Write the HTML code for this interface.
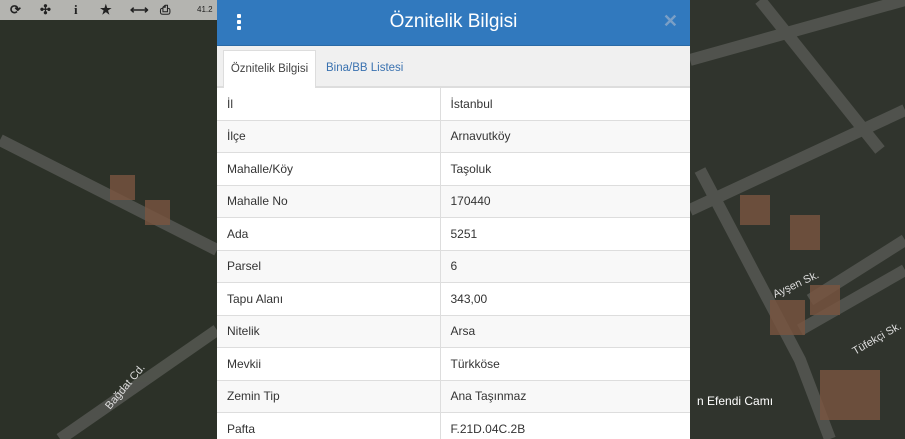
<!DOCTYPE html>
<html><head><meta charset="utf-8"><style>
*{margin:0;padding:0;box-sizing:border-box}
body{width:905px;height:439px;overflow:hidden;position:relative;background:#2f332c;font-family:"Liberation Sans",Arial,sans-serif}
#map{position:absolute;left:0;top:0}
.tb{position:absolute;left:0;top:0;width:217px;height:20px;background:#b4b4b0;color:#222;font-size:13px;font-weight:bold}
.tb span{position:absolute;top:2px}
.modal{position:absolute;left:217px;top:0;width:473px;height:439px;background:#fff;overflow:hidden}
.hd{height:46px;background:#3179be;border-bottom:1px solid #2a6aa6;color:#fff;position:relative}
.hd h1{font-size:19px;font-weight:normal;text-align:center;line-height:44px}
.dots{position:absolute;left:20px;top:14px;width:4px}
.dots i{display:block;width:4px;height:4px;background:#fff;border-radius:1px;margin-bottom:2px}
.x{position:absolute;right:12px;top:11px;color:#7a9fc6;font-size:18px;font-weight:bold}
.tabs{height:41px;background:#f0f0f0;position:relative;border-bottom:1px solid #ddd}
.t1{position:absolute;left:6px;top:4px;width:93px;height:38px;background:#fff;border:1px solid #ddd;border-bottom:none;font-size:11.5px;color:#444;text-align:center;line-height:37px}
.t2{position:absolute;left:109px;top:4px;font-size:11.5px;color:#3a72b0;line-height:37px}
table{width:473px;border-collapse:collapse;font-size:12px;color:#333}
td{height:32.5px;border-top:1px solid #ddd;padding-left:10px}
td:first-child{width:223px;border-right:1px solid #ddd}
tr:nth-child(even) td{background:#f8f8f8}
</style></head><body>
<svg id="map" width="905" height="439">
<rect width="905" height="439" fill="#30342d"/>
<rect x="0" y="0" width="217" height="439" fill="#2c3128"/>
<g stroke="#5e605b" stroke-width="12" fill="none" opacity=".7">
<path d="M690 210 L905 110"/><path d="M690 60 L905 0"/>
<path d="M700 170 L800 360 L830 439"/><path d="M760 0 L880 150"/>
<path d="M800 330 L905 270"/><path d="M810 300 L905 240"/>
<path d="M0 140 L217 250"/><path d="M60 439 L217 330"/>
</g>
<g fill="#7a5540" opacity=".8">
<rect x="740" y="195" width="30" height="30"/><rect x="790" y="215" width="30" height="35"/>
<rect x="770" y="300" width="35" height="35"/><rect x="810" y="285" width="30" height="30"/>
<rect x="820" y="370" width="60" height="50"/><rect x="110" y="175" width="25" height="25"/><rect x="145" y="200" width="25" height="25"/>
</g>
<text x="697" y="405" fill="#fff" font-size="12" font-family="Liberation Sans">n Efendi Camı</text>
<text x="110" y="410" fill="#ddd" font-size="11" transform="rotate(-50 110 410)" font-family="Liberation Sans">Bağdat Cd.</text>
<text x="775" y="298" fill="#ddd" font-size="11" transform="rotate(-25 775 298)" font-family="Liberation Sans">Ayşen Sk.</text>
<text x="855" y="355" fill="#ddd" font-size="11" transform="rotate(-30 855 355)" font-family="Liberation Sans">Tüfekçi Sk.</text>
</svg>
<div class="tb"><span style="left:10px">⟳</span><span style="left:40px">✣</span><span style="left:74px;font-family:'Liberation Serif'">i</span><span style="left:100px">★</span><span style="left:130px">⟷</span><span style="left:160px">⎙</span><span style="left:197px;font-size:8px;top:5px;font-weight:normal">41.2</span></div>
<div class="modal">
<div class="hd"><div class="dots"><i></i><i></i><i></i></div><h1>Öznitelik Bilgisi</h1><div class="x">✕</div></div>
<div class="tabs"><div class="t1">Öznitelik Bilgisi</div><div class="t2">Bina/BB Listesi</div></div>
<table>
<tr><td>İl</td><td>İstanbul</td></tr>
<tr><td>İlçe</td><td>Arnavutköy</td></tr>
<tr><td>Mahalle/Köy</td><td>Taşoluk</td></tr>
<tr><td>Mahalle No</td><td>170440</td></tr>
<tr><td>Ada</td><td>5251</td></tr>
<tr><td>Parsel</td><td>6</td></tr>
<tr><td>Tapu Alanı</td><td>343,00</td></tr>
<tr><td>Nitelik</td><td>Arsa</td></tr>
<tr><td>Mevkii</td><td>Türkköse</td></tr>
<tr><td>Zemin Tip</td><td>Ana Taşınmaz</td></tr>
<tr><td>Pafta</td><td>F.21D.04C.2B</td></tr>
</table>
</div>
</body></html>
